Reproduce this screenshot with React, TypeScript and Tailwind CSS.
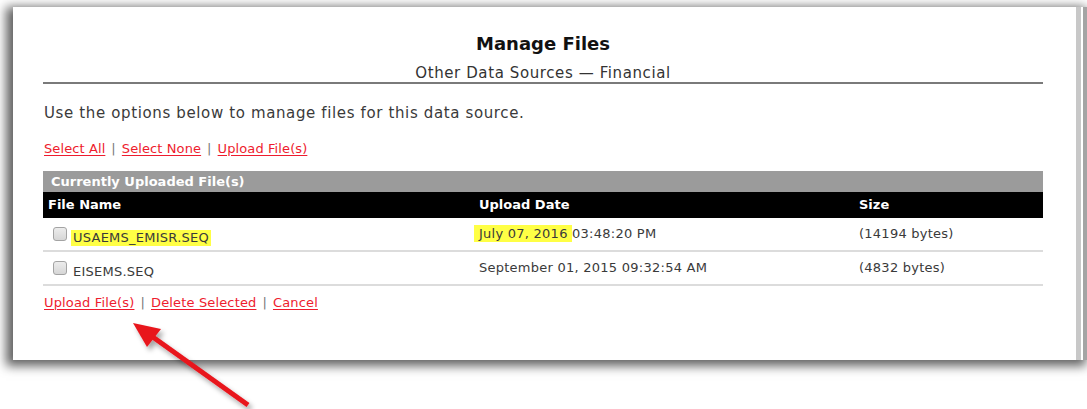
import React from "react";

const linkCls = "text-[#ee1c2e] underline underline-offset-2 decoration-1";

function Sep() {
  return <span className="text-[#777] mx-[6px]">|</span>;
}

function Check() {
  return (
    <span className="inline-block w-[14px] h-[14px] rounded-[3px] border border-[#a3a3a3] bg-gradient-to-b from-[#ececec] to-[#d6d6d6] shrink-0" />
  );
}

type Row = { name: string; date: string; time: string; size: string; mark?: boolean };

const rows: Row[] = [
  { name: "USAEMS_EMISR.SEQ", date: "July 07, 2016", time: "03:48:20 PM", size: "(14194 bytes)", mark: true },
  { name: "EISEMS.SEQ", date: "September 01, 2015", time: "09:32:54 AM", size: "(4832 bytes)" },
];

export default function App() {
  return (
    <div
      className="w-[1087px] h-[409px] bg-white overflow-hidden relative text-[#3a3a3a]"
      style={{ fontFamily: '"DejaVu Sans", Verdana, sans-serif' }}
    >
      <div className="ml-[13px] mt-[7px] h-[353px] flex shadow-[-4px_3px_10px_3px_rgba(0,0,0,0.62)]">
        <div className="w-[1063px] bg-white pl-[30px] pt-[25px]">
          <div className="w-[1000px]">
            <h1 className="text-center font-bold text-[18px] leading-[24px] text-[#111]">Manage Files</h1>
            <div className="mt-[8px] text-center text-[15px] leading-[18px] tracking-[0.6px] text-[#333] border-b-2 border-[#7a7a7a]">
              Other Data Sources — Financial
            </div>
            <p className="mt-[19px] pl-px text-[15px] leading-[20px] tracking-[0.63px] text-[#3a3a3a]">
              Use the options below to manage files for this data source.
            </p>
            <div className="mt-[18px] pl-[1px] text-[13px] leading-[16px] tracking-[0.1px]">
              <a className={linkCls}>Select All</a>
              <Sep />
              <a className={linkCls}>Select None</a>
              <Sep />
              <a className={linkCls}>Upload File(s)</a>
            </div>

            <div className="mt-[14px]">
              <div className="h-[21px] bg-[#9b9b9b] text-white font-bold text-[13px] leading-[21px] pl-[8px]">
                Currently Uploaded File(s)
              </div>
              <div className="h-[26px] bg-black text-white font-bold text-[13px] grid grid-cols-[436px_380px_184px] items-center">
                <div className="pl-[5px]">File Name</div>
                <div>Upload Date</div>
                <div>Size</div>
              </div>
              {rows.map((r) => (
                <div
                  key={r.name}
                  className="h-[34px] border-b-2 border-[#dcdcdc] grid grid-cols-[436px_380px_184px] items-center text-[13px] tracking-[0.25px] text-[#3a3a3a]"
                >
                  <div className="flex items-center pl-[10px] gap-[4px]">
                    <Check />
                    <span className={"mt-[7px] leading-[16px] pl-[2px] pr-[2px] " + (r.mark ? "bg-[#ffff45]" : "")}>
                      {r.name}
                    </span>
                  </div>
                  <div>
                    <span className={r.mark ? "bg-[#ffff45] -ml-[5px] pl-[5px] py-[1px]" : ""}>{r.date} </span>
                    {r.time}
                  </div>
                  <div>{r.size}</div>
                </div>
              ))}
            </div>

            <div className="mt-[9px] pl-[1px] text-[13px] leading-[16px] tracking-[0.15px]">
              <a className={linkCls}>Upload File(s)</a>
              <Sep />
              <a className={linkCls}>Delete Selected</a>
              <Sep />
              <a className={linkCls}>Cancel</a>
            </div>
          </div>
        </div>
        <div className="w-[5px] bg-[#c8c8c8]" />
        <div className="w-[2px] bg-white" />
        <div className="w-[4px] bg-[#a4a4a4]" />
      </div>

      {/* red callout arrow pointing at the bottom upload link */}
      <svg className="absolute left-0 top-0 pointer-events-none" width="1087" height="409" viewBox="0 0 1087 409">
        <defs>
          <filter id="arrowShadow" x="-20%" y="-20%" width="140%" height="140%">
            <feDropShadow dx="3" dy="4" stdDeviation="2.5" floodColor="#000" floodOpacity="0.35" />
          </filter>
        </defs>
        <g filter="url(#arrowShadow)">
          <line x1="248" y1="405" x2="150" y2="335" stroke="#e8151d" strokeWidth="5" />
          <polygon points="133,323 161,329 147,347" fill="#e8151d" />
        </g>
      </svg>
    </div>
  );
}
